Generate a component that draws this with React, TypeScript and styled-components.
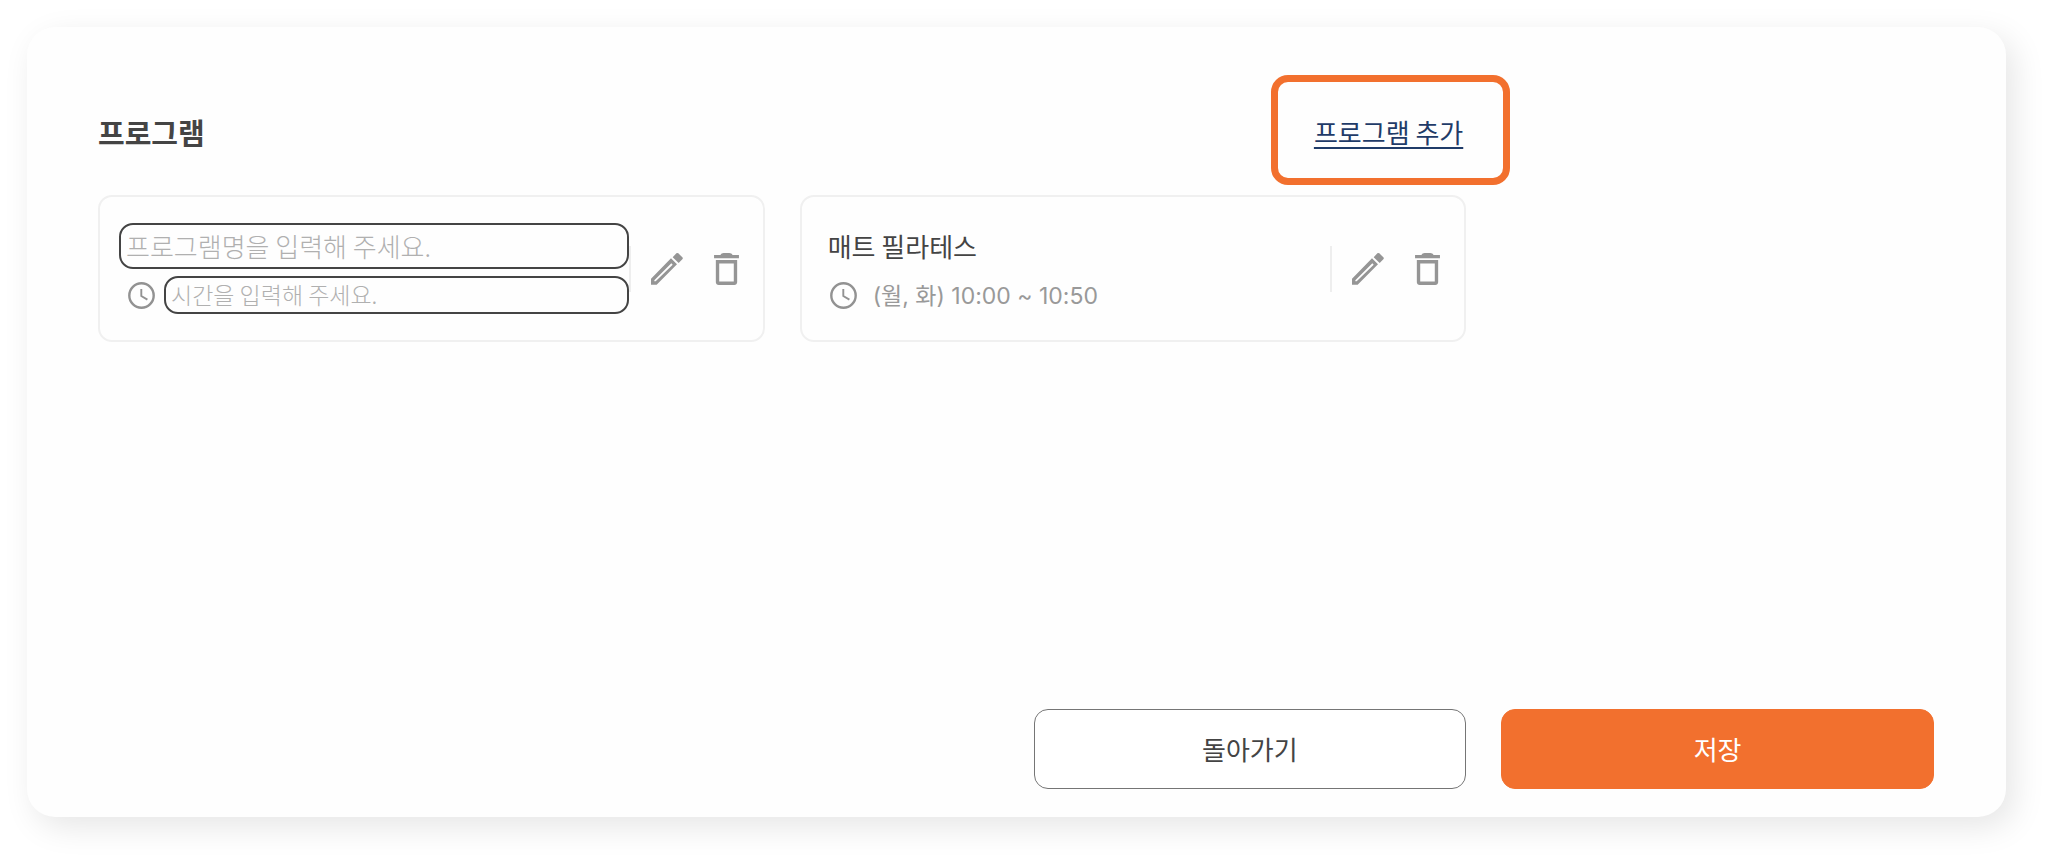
import React, { useState } from 'react';
import styled, { createGlobalStyle, css } from 'styled-components';

const GlobalStyle = createGlobalStyle`
  *, *::before, *::after { box-sizing: border-box; }
  body {
    margin: 0;
    background: #ffffff;
    color: #444444;
    font-family: 'Noto Sans CJK KR', sans-serif;
  }
  button, input { font-family: inherit; }
`;

const Page = styled.main`
  display: flex;
  min-height: 100vh;
  padding: 27px 42px 42px 27px;
`;

const Panel = styled.form`
  flex: 1;
  display: grid;
  grid-template-columns: repeat(4, minmax(0, 1fr));
  grid-template-rows: 1fr auto;
  gap: 36px 35px;
  padding: 84px 72px 28px 71px;
  border-radius: 28px;
  background: #fefefe;
  box-shadow: 8px 10px 32px rgba(0, 0, 0, 0.1);
`;

const Programs = styled.section`
  grid-column: 1 / span 3;
`;

const Header = styled.header`
  display: flex;
  align-items: center;
  justify-content: space-between;
  height: 42px;
  margin-bottom: 42px;
  padding-right: 3px;
`;

const Title = styled.h1`
  margin: 0;
  font-size: 29px;
  line-height: 42px;
  font-weight: 700;
`;

const AddLink = styled.a`
  position: relative;
  display: block;
  color: #1f3b68;
  font-size: 26px;
  line-height: 42px;
  text-decoration: underline;
  text-decoration-thickness: 2px;
  text-underline-offset: 4px;

  &::after {
    content: '';
    position: absolute;
    inset: -36px -47px -32px -43px;
    border: 7px solid #f2702e;
    border-radius: 17px;
    pointer-events: none;
  }
`;

const CardList = styled.ul`
  display: grid;
  grid-template-columns: repeat(2, minmax(0, 1fr));
  gap: 35px;
  margin: 0;
  padding: 0;
  list-style: none;
`;

const Card = styled.li`
  display: flex;
  align-items: center;
  height: 147px;
  padding: 0 24px 0 19px;
  border: 2px solid #f0f0f0;
  border-radius: 14px;
`;

const Fields = styled.div`
  flex: 1;
  display: flex;
  flex-direction: column;
  gap: 7px;
  min-width: 0;
`;

const TimeRow = styled.div`
  display: flex;
  align-items: center;
  gap: 9px;
  padding-left: 9px;

  svg { flex: none; }
`;

const fieldBox = css<{ $small?: boolean }>`
  width: 100%;
  min-width: 0;
  height: ${({ $small }) => ($small ? 38 : 46)}px;
  margin: 0;
  padding: 0 5px 2px;
  border: 2px solid transparent;
  border-radius: 14px;
  font-size: ${({ $small }) => ($small ? 23 : 26)}px;
`;

const TextField = styled.input<{ $small?: boolean }>`
  ${fieldBox}
  border-color: #444444;
  background: transparent;
  color: #444444;
  font-weight: 300;

  &::placeholder { color: #b0b0b0; opacity: 1; }
`;

const FieldText = styled.p<{ $small?: boolean }>`
  ${fieldBox}
  display: flex;
  align-items: center;
  color: ${({ $small }) => ($small ? '#999999' : '#444444')};
  font-family: ${({ $small }) => ($small ? 'Inter, ' : '')}'Noto Sans CJK KR', sans-serif;
`;

const Actions = styled.div`
  display: flex;
  align-items: center;
  gap: 31px;
  height: 46px;
  padding-left: 20px;
  border-left: 2px solid #eeeeee;
`;

const IconButton = styled.button`
  display: flex;
  padding: 0;
  border: 0;
  background: none;
  color: #959595;
  cursor: pointer;
`;

const BottomButton = styled.button<{ $primary?: boolean }>`
  grid-column: ${({ $primary }) => ($primary ? 4 : 3)};
  height: 80px;
  padding: 0 0 2px;
  border: 1px solid ${({ $primary }) => ($primary ? '#f2702e' : '#757575')};
  border-radius: 14px;
  background: ${({ $primary }) => ($primary ? '#f2702e' : '#ffffff')};
  color: ${({ $primary }) => ($primary ? '#ffffff' : '#444444')};
  font-size: 26px;
  cursor: pointer;
`;

const ClockIcon = () => (
  <svg width="27" height="27" viewBox="0 0 27 27" fill="none" stroke="#929292" aria-hidden="true">
    <circle cx="13.5" cy="13.5" r="12.2" strokeWidth="2.4" />
    <path d="M13.3 7V14L19.4 17.6" strokeWidth="1.9" />
  </svg>
);

const PencilIcon = () => (
  <svg width="32" height="32" viewBox="0 0 96 96" fill="currentColor" aria-hidden="true">
    <path d="M82 1Q79 -1 76 1L65 13L83 30L94 19Q97 16 94 13Z" />
    <path fillRule="evenodd" d="M60 16L78 34L17 95H0V77ZM61 31L10 82V85H14L65 35Z" />
  </svg>
);

const TrashIcon = () => (
  <svg width="25" height="32" viewBox="5 3 14 18" fill="currentColor" aria-hidden="true">
    <path d="M6 19.4c0 .9.7 1.600 1.600 1.600h8.800c.9 0 1.600-.7 1.600-1.600V7H6v12.400zM7.900 8.900h8.200v10.200H7.900V8.900zM15.400 4.100c-.4-.7-1-1.100-1.800-1.100h-3.200c-.8 0-1.400.4-1.800 1.100H5v1.800h14V4.100z" />
  </svg>
);

interface Program {
  id: number;
  name: string;
  time: string;
  editing: boolean;
}

const initialPrograms: Program[] = [
  { id: 1, name: '', time: '', editing: true },
  { id: 2, name: '매트 필라테스', time: '(월, 화) 10:00 ~ 10:50', editing: false },
];

export default function App() {
  const [programs, setPrograms] = useState(initialPrograms);

  const update = (id: number, change: Partial<Program>) =>
    setPrograms((list) => list.map((p) => (p.id === id ? { ...p, ...change } : p)));

  const addProgram = (event: React.MouseEvent) => {
    event.preventDefault();
    setPrograms((list) => [{ id: Date.now(), name: '', time: '', editing: true }, ...list]);
  };

  return (
    <>
      <GlobalStyle />
      <Page>
        <Panel onSubmit={(event) => event.preventDefault()}>
          <Programs>
            <Header>
              <Title>프로그램</Title>
              <AddLink href="#add" onClick={addProgram}>프로그램 추가</AddLink>
            </Header>
            <CardList>
              {programs.map((p) => (
                <Card key={p.id}>
                  <Fields>
                    {p.editing ? (
                      <TextField
                        aria-label="프로그램명"
                        placeholder="프로그램명을 입력해 주세요."
                        value={p.name}
                        onChange={(e) => update(p.id, { name: e.target.value })}
                      />
                    ) : (
                      <FieldText>{p.name}</FieldText>
                    )}
                    <TimeRow>
                      <ClockIcon />
                      {p.editing ? (
                        <TextField
                          $small
                          aria-label="시간"
                          placeholder="시간을 입력해 주세요."
                          value={p.time}
                          onChange={(e) => update(p.id, { time: e.target.value })}
                        />
                      ) : (
                        <FieldText $small>{p.time}</FieldText>
                      )}
                    </TimeRow>
                  </Fields>
                  <Actions>
                    <IconButton
                      type="button"
                      aria-label="수정"
                      onClick={() => update(p.id, { editing: !p.editing })}
                    >
                      <PencilIcon />
                    </IconButton>
                    <IconButton
                      type="button"
                      aria-label="삭제"
                      onClick={() => setPrograms((list) => list.filter((x) => x.id !== p.id))}
                    >
                      <TrashIcon />
                    </IconButton>
                  </Actions>
                </Card>
              ))}
            </CardList>
          </Programs>
          <BottomButton type="button">돌아가기</BottomButton>
          <BottomButton type="submit" $primary>저장</BottomButton>
        </Panel>
      </Page>
    </>
  );
}
